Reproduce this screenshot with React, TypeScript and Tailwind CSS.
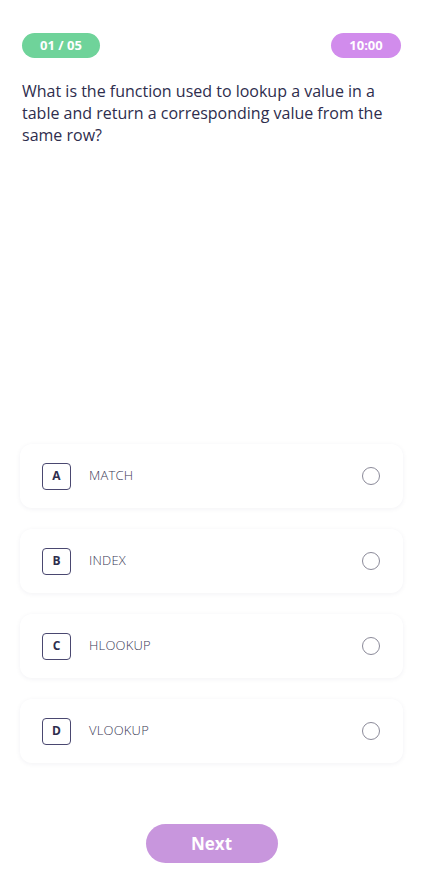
import React from 'react'

const options = [
  { key: 'A', label: 'MATCH' },
  { key: 'B', label: 'INDEX' },
  { key: 'C', label: 'HLOOKUP' },
  { key: 'D', label: 'VLOOKUP' },
]

const OptionCard: React.FC<{ letter: string; label: string }> = ({ letter, label }) => {
  return (
    <div className="flex items-center h-[64px] rounded-xl bg-white shadow-[0_1px_5px_rgba(40,40,90,0.06)] pl-[22px] pr-[23px]">
      <div className="flex items-center justify-center w-[29px] h-[27px] rounded-[4px] border border-[#4a4870] text-[12px] font-bold text-[#2e2d4d]">
        {letter}
      </div>
      <span className="ml-[18px] text-[13px] font-light tracking-[0.2px] text-[#3a3955]">
        {label}
      </span>
      <span className="ml-auto w-[18px] h-[18px] rounded-full border-[1.5px] border-[#8b8a99]" />
    </div>
  )
}

export default function App() {
  return (
    <div
      className="flex flex-col w-[423px] h-[883px] bg-white px-5"
      style={{ fontFamily: '"Open Sans", "Noto Sans", sans-serif' }}
    >
      <div className="flex items-center justify-between mt-[33px] px-0.5">
        <span className="flex items-center justify-center w-[78px] h-[25px] rounded-full bg-[#6fd39a] text-white text-[13px] font-bold">
          01 / 05
        </span>
        <span className="flex items-center justify-center w-[70px] h-[25px] rounded-full bg-[#d18cec] text-white text-[13px] font-bold">
          10:00
        </span>
      </div>

      <p className="mt-[22px] px-0.5 text-[16px] leading-[22px] text-[#2e2d4d]">
        What is the function used to lookup a value in a table and return a corresponding value
        from the same row?
      </p>

      <div className="flex flex-col gap-[21px] mt-auto">
        {options.map((o) => (
          <OptionCard key={o.key} letter={o.key} label={o.label} />
        ))}
      </div>

      <div className="flex justify-center mt-[61px] mb-[20px]">
        <button className="w-[132px] h-[39px] rounded-full bg-[#c896dd] text-white text-[17px] font-bold">
          Next
        </button>
      </div>
    </div>
  )
}
